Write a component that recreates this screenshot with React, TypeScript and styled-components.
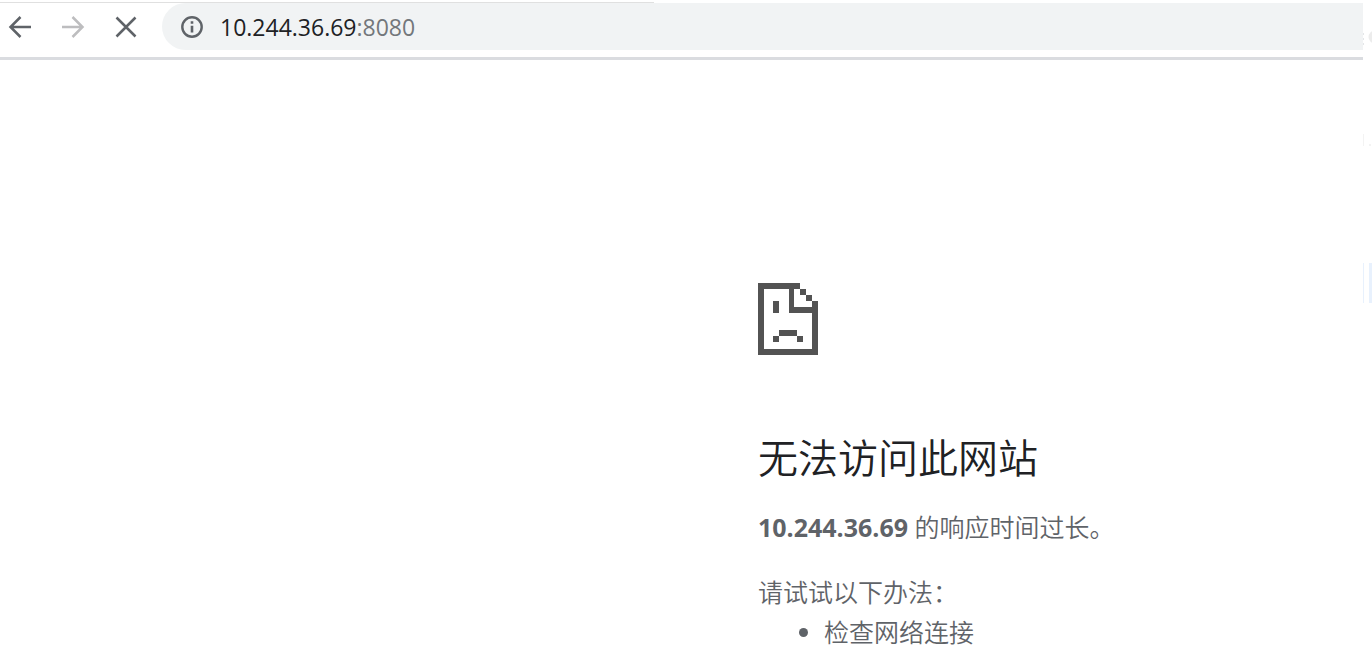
import React from "react";
import styled, { createGlobalStyle } from "styled-components";

const GlobalStyle = createGlobalStyle`
  * { box-sizing: border-box; }
  body {
    margin: 0;
    background: #ffffff;
    color: #5f6368;
    font-family: "Open Sans", "Noto Sans CJK SC", sans-serif;
  }
`;

const Page = styled.div`
  display: flex;
  min-height: 100vh;
  overflow: hidden;
`;

const Browser = styled.div`
  flex: 1;
  min-width: 0;
`;

const TabEdge = styled.div`
  width: 48%;
  height: 3px;
  margin-bottom: 1px;
  border-bottom: 1px solid #e0e0e0;
`;

const Toolbar = styled.header`
  display: flex;
  align-items: center;
  height: 56px;
  padding-bottom: 8px;
  border-bottom: 3px solid #dadce0;
`;

const NavGroup = styled.nav`
  display: flex;
  gap: 21px;
  padding: 0 20px 0 4px;
`;

const NavButton = styled.button`
  display: flex;
  align-items: center;
  justify-content: center;
  width: 32px;
  height: 32px;
  padding: 0;
  border: 0;
  background: none;
  color: #5f6368;

  &:disabled {
    color: #bdbdbf;
  }
`;

const AddressBar = styled.form`
  display: flex;
  flex: 1;
  align-items: center;
  min-width: 0;
  height: 47px;
  padding-left: 18px;
  border-radius: 24px 0 0 24px;
  background: #f1f3f4;
  color: #5f6368;
`;

const InfoButton = styled.button`
  display: flex;
  margin-right: 16px;
  padding: 0;
  border: 0;
  background: none;
  color: inherit;
`;

const AddressInput = styled.input<{ $tone: string; $grow?: boolean }>`
  flex: ${(p) => (p.$grow ? "1" : "none")};
  field-sizing: content;
  min-width: 0;
  padding: 0;
  border: 0;
  outline: 0;
  background: none;
  color: ${(p) => p.$tone};
  font: 400 23px/32px "Open Sans", sans-serif;
`;

const ErrorPanel = styled.main`
  width: 100%;
  max-width: 605px;
  margin-left: auto;
  padding-top: 223px;
  font-size: 25px;
  font-weight: 350;
  line-height: 40px;
`;

const PageIcon = styled.svg`
  display: block;
  width: 60px;
  height: 72px;
  color: #535353;
`;

const Title = styled.h1`
  margin: 75px 0 21px;
  color: #202124;
  font-size: 40px;
  font-weight: 350;
  line-height: 56px;
`;

const Paragraph = styled.p`
  margin: 0 0 25px;
`;

const Host = styled.strong`
  font-weight: 700;
`;

const HintTitle = styled.p`
  margin: 0;
`;

const HintList = styled.ul`
  margin: 0;
  padding-left: 66px;
`;

const Gutter = styled.aside`
  flex: none;
  width: 9px;
`;

function BackIcon() {
  return (
    <svg width="24" height="24" viewBox="0 0 24 24" fill="none" stroke="currentColor" strokeWidth="2.5" aria-hidden="true">
      <path d="M23 12H3M12.5 2L2.5 12L12.5 22" />
    </svg>
  );
}

function ForwardIcon() {
  return (
    <svg width="24" height="24" viewBox="0 0 24 24" fill="none" stroke="currentColor" strokeWidth="2.5" aria-hidden="true">
      <path d="M1 12H21M11.5 2L21.5 12L11.5 22" />
    </svg>
  );
}

function StopIcon() {
  return (
    <svg width="24" height="24" viewBox="0 0 24 24" fill="none" stroke="currentColor" strokeWidth="2.5" aria-hidden="true">
      <path d="M2.5 2.5L21.5 21.5M21.5 2.5L2.5 21.5" />
    </svg>
  );
}

function InfoIcon() {
  return (
    <svg width="24" height="24" viewBox="0 0 24 24" aria-hidden="true">
      <circle cx="12" cy="12" r="9.7" fill="none" stroke="currentColor" strokeWidth="2.4" />
      <path d="M10.7 6.3h2.6v2.5h-2.6zM10.7 10.8h2.6v6.6h-2.6z" fill="currentColor" />
    </svg>
  );
}

export default function App() {
  return (
    <>
      <GlobalStyle />
      <Page>
        <Browser>
          <TabEdge />
          <Toolbar>
            <NavGroup>
              <NavButton type="button" aria-label="后退"><BackIcon /></NavButton>
              <NavButton type="button" aria-label="前进" disabled><ForwardIcon /></NavButton>
              <NavButton type="button" aria-label="停止"><StopIcon /></NavButton>
            </NavGroup>
            <AddressBar onSubmit={(e) => e.preventDefault()}>
              <InfoButton type="button" aria-label="网站信息"><InfoIcon /></InfoButton>
              <AddressInput $tone="#202124" aria-label="主机" defaultValue="10.244.36.69" />
              <AddressInput $tone="#73777b" $grow aria-label="端口" defaultValue=":8080" />
            </AddressBar>
          </Toolbar>
          <ErrorPanel>
            <PageIcon viewBox="0 0 60 72" fill="currentColor" aria-hidden="true">
              <path d="M0 0H42V6H36V24H54V18H60V72H0ZM6 6V66H54V30H31V6Z" fillRule="evenodd" />
              <path d="M42 6h6v6h-6zM48 12h6v6h-6zM15 18h6v12h-6zM21 47h18v6H21zM15 53h6v6h-6zM39 53h6v6h-6z" />
            </PageIcon>
            <Title>无法访问此网站</Title>
            <Paragraph><Host>10.244.36.69</Host> 的响应时间过长。</Paragraph>
            <HintTitle>请试试以下办法：</HintTitle>
            <HintList>
              <li>检查网络连接</li>
            </HintList>
          </ErrorPanel>
        </Browser>
        <Gutter>
          <svg width="9" height="310" viewBox="0 0 9 310" aria-hidden="true">
            <path d="M0 33h1v2H0zM0 38h1v2H0zM0 43h1v2H0z" fill="#e4e6e8" />
            <circle cx="12" cy="37" r="6.5" fill="#ececec" />
            <path d="M0 134h1v12H0zM6 144h2v2H6z" fill="#f3f3f3" />
            <path d="M0 263h1v40H0zM6 263h3v40H6z" fill="#e8f1fd" />
          </svg>
        </Gutter>
      </Page>
    </>
  );
}
